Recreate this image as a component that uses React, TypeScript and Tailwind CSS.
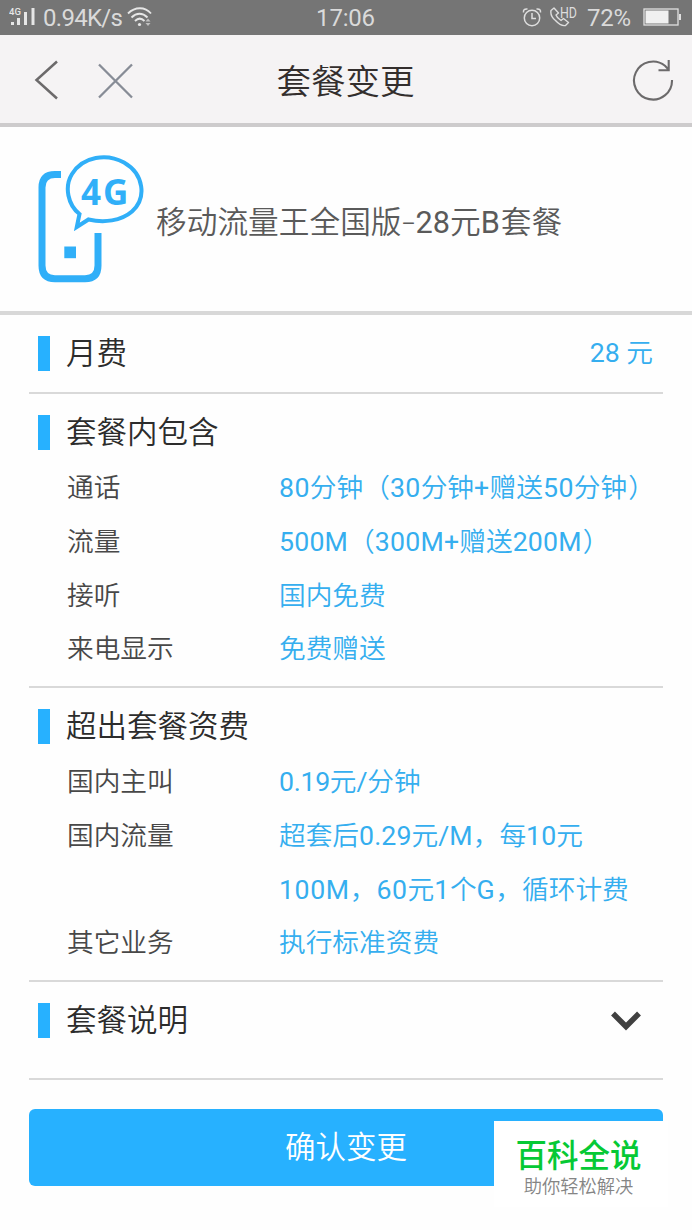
import type { ReactNode } from "react";
import { clsx } from "clsx";

type Line = { text: string; tracking?: string };
type Item = { label: string; lines: Line[] };

const included: Item[] = [
  { label: "通话", lines: [{ text: "80分钟（30分钟+赠送50分钟）", tracking: "tracking-[0.4px]" }] },
  { label: "流量", lines: [{ text: "500M（300M+赠送200M）", tracking: "tracking-[0.2px]" }] },
  { label: "接听", lines: [{ text: "国内免费" }] },
  { label: "来电显示", lines: [{ text: "免费赠送" }] },
];

const extra: Item[] = [
  { label: "国内主叫", lines: [{ text: "0.19元/分钟", tracking: "tracking-[-0.3px]" }] },
  {
    label: "国内流量",
    lines: [
      { text: "超套后0.29元/M，每10元", tracking: "tracking-[0.1px]" },
      { text: "100M，60元1个G，循环计费", tracking: "tracking-[0.6px]" },
    ],
  },
  { label: "其它业务", lines: [{ text: "执行标准资费" }] },
];

function StatusBar() {
  return (
    <div className="flex h-[35px] shrink-0 items-center justify-between bg-[#757575] pl-[9px] pr-[10px] pt-px text-[24px] font-normal leading-[34px] text-[#dadada]">
      <div className="flex w-[300px] items-center">
        <svg className="-translate-y-px" width="27" height="20" viewBox="0 0 27 20" fill="#e6e6e6">
          <text x="0" y="7.5" fontSize="9.500" fontWeight="500" fontFamily="Roboto, sans-serif">4G</text>
          <rect x="2" y="15" width="3" height="3" />
          <rect x="8" y="11" width="3" height="7" />
          <rect x="15" y="5" width="3" height="13" />
          <rect x="22.500" y="1" width="3" height="17" />
        </svg>
        <span className="ml-[7px] w-[79px] whitespace-nowrap tracking-[-0.7px]">0.94K/s</span>
        <svg className="ml-[5px] -translate-y-px" width="26" height="22" viewBox="0 0 26 22" fill="none" stroke="#e6e6e6" strokeWidth="1.900">
          <path d="M1 7.500C8 0.500 18 0.500 24 7.500M4.500 11.500C9.500 6.500 15.500 6.500 20.500 11.500M8 15C11 12 14.500 12 17.500 15" />
          <circle cx="12.500" cy="18.500" r="1.600" fill="#e6e6e6" stroke="none" />
          <path d="M18.500 15.500l2.500-3 2.500 3zM18.500 17l2.500 3 2.500-3z" fill="#c0c0c0" stroke="none" />
        </svg>
      </div>
      <span className="w-[60px] whitespace-nowrap text-center tracking-[-0.2px]">17:06</span>
      <div className="flex w-[300px] items-center justify-end">
        <svg className="-translate-y-px" width="20" height="20" viewBox="0 0 20 20" fill="none" stroke="#dedede" strokeWidth="1.500">
          <circle cx="10" cy="11" r="7.700" />
          <path d="M10 6v5.500h4M1.500 5.500Q1 1.500 5.500 2M18.500 5.500Q19 1.500 14.500 2" />
        </svg>
        <svg className="ml-[7px] -translate-y-[3px]" width="29" height="24" viewBox="0 -3 29 24" fill="none" stroke="#dedede" strokeWidth="1.400">
          <path d="M5 2L2 4.500Q1 10 6.500 14.500Q12 20.500 16.500 19.500L19.500 16.500L14.500 12.500L12 14.500Q8 12 7 9L9.500 7Z" strokeLinejoin="round" />
          <text x="11" y="11.500" textLength="17" lengthAdjust="spacingAndGlyphs" fontSize="14.500" fontWeight="400" fill="#dedede" stroke="none" fontFamily="Roboto, sans-serif">HD</text>
        </svg>
        <span className="ml-[9px] w-[47px] whitespace-nowrap tracking-[-0.3px]">72%</span>
        <svg className="ml-[9px] -translate-y-px" width="39" height="18" viewBox="0 0 39 18" fill="none">
          <rect x="1" y="1" width="34" height="16" stroke="#e0e0e0" strokeWidth="1.300" />
          <rect x="2.500" y="2.500" width="23" height="13" fill="#f0f0f0" />
          <rect x="36" y="6" width="2" height="6" fill="#e0e0e0" />
        </svg>
      </div>
    </div>
  );
}

function Header() {
  return (
    <header className="grid h-[92px] shrink-0 grid-cols-[1fr_auto_1fr] items-center border-b-4 border-[#cdcbcc] bg-[#f5f3f4] pl-[34px] pr-[17px] pt-[2px]">
      <div className="flex items-center">
        <svg width="26" height="40" viewBox="0 0 26 40" fill="none" stroke="#6c6a6b" strokeWidth="2.500">
          <path d="M23 1.500L2.500 20L23 38.500" />
        </svg>
        <svg className="ml-[3px] translate-y-px" width="70" height="36" viewBox="0 0 70 36" fill="none" stroke="#878c96" strokeWidth="2.300">
          <path d="M36 1.500L69 34.500M69 1.500L36 34.500" />
        </svg>
      </div>
      <h1 className="-translate-x-[9px] translate-y-[2px] whitespace-nowrap text-[34.500px] font-[350] leading-[80px] text-[#332e2d]">套餐变更</h1>
      <div className="flex justify-end">
        <svg width="44" height="42" viewBox="0 0 44 42" fill="none" stroke="#6c6a6b" strokeWidth="2.100">
          <path d="M41 21A19 19 0 1 1 34 6.800L37.500 10.500M37.700 1V11.200H27.500" />
        </svg>
      </div>
    </header>
  );
}

function PhoneLogo() {
  return (
    <svg width="108" height="130" viewBox="0 0 108 130" fill="none" stroke="#30aff8">
      <path d="M23 20.500H17Q4 20.500 4 33.500V111.500Q4 124.700 17 124.700H47Q60 124.700 60 111.500V79" strokeWidth="7" />
      <rect x="26.300" y="92.500" width="11.700" height="11.700" fill="#30aff8" stroke="none" />
      <path d="M38.800 73L41.500 60C30 51 26 33 34 20C45 2 69 -1 86 8.500C106 20 109 44 94 57.500C83 67 66 69 50.500 65.500Z" strokeWidth="4" />
      <text x="43" y="51" fontSize="35" fontWeight="700" letterSpacing="2" fontFamily="Open Sans, sans-serif" fill="#30aff8" stroke="none">4G</text>
    </svg>
  );
}

function SectionTitle({ children }: { children: ReactNode }) {
  return (
    <div className="flex h-[35px] items-center">
      <span className="h-[35px] w-[12px] bg-[#27b1ff]" />
      <h2 className="ml-[16px] whitespace-nowrap text-[30.500px] font-[350] leading-[35px] text-[#2c2c2c]">{children}</h2>
    </div>
  );
}

function ValueLine({ text, tracking }: Line) {
  const runs = text.split(/([A-Za-z0-9.+/]+|）)/).filter(Boolean);
  return (
    <div className="whitespace-nowrap">
      {runs.map((run, i) => (
        <span
          key={i}
          className={clsx(
            /^[A-Za-z0-9.+/]+$/.test(run) && ["font-normal", tracking],
            run === "）" && "ml-px",
          )}
        >
          {run}
        </span>
      ))}
    </div>
  );
}

function Details({ items }: { items: Item[] }) {
  return (
    <dl className="mt-[12px] pl-[29px] text-[26.700px] font-[350] leading-[53.800px]">
      {items.map((item) => (
        <div key={item.label} className="flex">
          <dt className="w-[212px] shrink-0 text-[#484848]">{item.label}</dt>
          <dd className="text-[#35aeef]">
            {item.lines.map((line) => (
              <ValueLine key={line.text} {...line} />
            ))}
          </dd>
        </div>
      ))}
    </dl>
  );
}

export default function App() {
  return (
    <div className="relative flex h-[1230px] w-[692px] flex-col overflow-hidden bg-[#fefefe] font-[Roboto,'Noto_Sans_CJK_SC',sans-serif]">
      <StatusBar />
      <Header />
      <div className="flex h-[188px] shrink-0 items-center border-b-4 border-[#d8d8d8] pl-[38px]">
        <PhoneLogo />
        <p className="ml-[10px] whitespace-nowrap pt-[8px] text-[30.700px] font-[350] leading-[46px] text-[#5a5a5a]">
          移动流量王全国版<span className="inline-block w-[14px] origin-left scale-x-150">-</span>
          <span className="font-normal">28</span>元<span className="font-normal">B</span>
          <span className="ml-px">套餐</span>
        </p>
      </div>
      <main className="flex flex-col px-[29px]">
        <section className="flex h-[79px] items-start justify-between border-b-2 border-[#d9d9d9] pl-[9px] pr-[10px] pt-[21px]">
          <SectionTitle>月费</SectionTitle>
          <span className="text-[26.700px] font-[350] leading-[35px] text-[#35aeef]"><span className="font-normal">28 </span>元</span>
        </section>
        <section className="h-[294px] border-b-2 border-[#d9d9d9] pl-[9px] pt-[21px]">
          <SectionTitle>套餐内包含</SectionTitle>
          <Details items={included} />
        </section>
        <section className="h-[294px] border-b-2 border-[#d9d9d9] pl-[9px] pt-[21px]">
          <SectionTitle>超出套餐资费</SectionTitle>
          <Details items={extra} />
        </section>
        <section className="flex h-[98px] items-start justify-between border-b-2 border-[#d9d9d9] pl-[9px] pr-[22px] pt-[21px]">
          <SectionTitle>套餐说明</SectionTitle>
          <svg className="mt-[8px]" width="30" height="21" viewBox="0 0 30 21" fill="none" stroke="#404040" strokeWidth="5.500">
            <path d="M2 2.500L15 15.500L28 2.500" />
          </svg>
        </section>
        <button className="mt-[29px] h-[77px] rounded-[6px] bg-[#27b1ff] text-[30.500px] font-[350] leading-[77px] text-white">确认变更</button>
      </main>
      <div className="absolute left-[494px] top-[1121px] flex h-[86px] w-[174px] flex-col items-center bg-white pr-[5px] pt-[15px]">
        <span className="whitespace-nowrap text-[31.500px] font-medium leading-[42px] text-[#06c935]">百科全说</span>
        <span className="whitespace-nowrap text-[18.300px] font-[350] leading-[18px] text-[#858585]">助你轻松解决</span>
      </div>
    </div>
  );
}
